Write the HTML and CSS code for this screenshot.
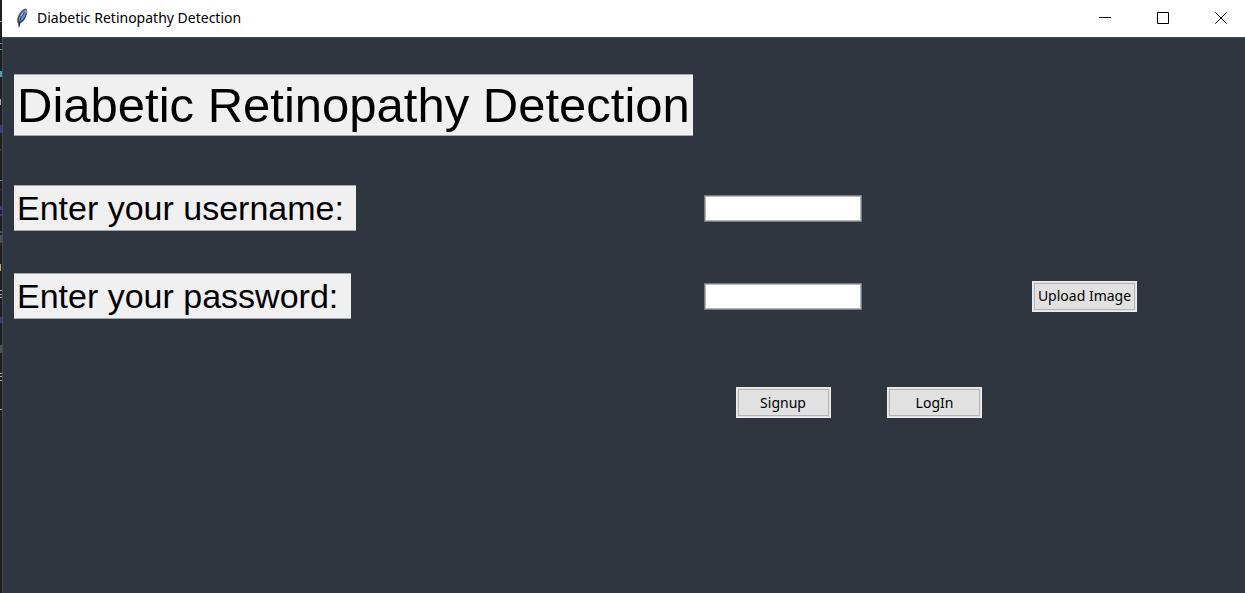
FILE: index.html
```
<!DOCTYPE html>
<html lang="en">
<head>
<meta charset="utf-8">
<title>Diabetic Retinopathy Detection</title>
<link rel="stylesheet" href="styles.css">
</head>
<body>
<div class="desktop">
  <svg class="editor-edge" viewBox="0 0 2 593" preserveAspectRatio="xMinYMin slice" aria-hidden="true">
    <path fill="#b0b0b0" d="M0 21h2v1H0zM0 290h2v1H0zM0 294h2v1H0zM0 297h2v1H0zM0 373h2v1H0zM0 376h2v1H0zM0 380h2v1H0zM0 409h2v1H0zM0 99h1v6H0z"/>
    <path fill="#4aa0b8" d="M0 43h2v1H0zM0 49h2v1H0zM0 71h2v6H0zM0 180h2v1H0z"/>
    <path fill="#3a3a8c" d="M0 125h2v8H0zM0 206h2v4H0zM0 214h2v2H0zM0 317h2v6H0z"/>
    <path fill="#c8a468" d="M0 264h1v7H0z"/>
    <path fill="#7a2424" d="M0 149h1v2H0zM0 189h1v1H0zM0 244h1v1H0z"/>
    <path fill="#4c525c" d="M0 231h2v2H0zM0 235h2v8H0zM0 345h2v8H0z"/>
  </svg>
  <main class="window">
    <header class="titlebar">
      <svg class="feather" viewBox="0 0 14 20" aria-hidden="true">
        <path d="M11 .5C8 .8 4.500 4.500 3 8.500C1.800 11.500 2 14 3.200 16L3.700 19.500L4.800 18.500L5.200 15.500C8.500 14 11.200 10 12 5.500C12.400 3 12.200 1 11 .5Z" fill="#4b4b4d"/>
        <path d="M10.300 2C7.800 3 5.300 6 4.300 9.500C3.700 11.800 3.700 13 4.200 14.300C7.500 12.500 9.700 9.500 10.700 6C11.200 4 11 2.500 10.300 2Z" fill="#5a96de"/>
        <path d="M9.500 4L5.500 10.500L4 18.500" fill="none" stroke="#1c3250" stroke-width=".8"/>
        <path d="M11 1.500L11 5M8 4.500L6 8" fill="none" stroke="#b9cce0" stroke-width=".8"/>
      </svg>
      <span class="caption">Diabetic Retinopathy Detection</span>
      <div class="controls">
        <button class="control" type="button" aria-label="Minimize"><svg class="glyph" viewBox="0 0 12 12"><path d="M0 5.500H12"/></svg></button>
        <button class="control" type="button" aria-label="Maximize"><svg class="glyph" viewBox="0 0 12 12"><path d="M.5 .5H11.500V11.500H.5Z"/></svg></button>
        <button class="control" type="button" aria-label="Close"><svg class="glyph" viewBox="0 0 12 12"><path d="M.3 .3L11.700 11.700M11.700 .3L.3 11.700"/></svg></button>
      </div>
    </header>
    <form class="form">
      <h1 class="label heading">Diabetic Retinopathy Detection</h1>
      <label class="label username-label" for="username">Enter your username: </label>
      <input class="entry username" id="username" type="text">
      <label class="label password-label" for="password">Enter your password: </label>
      <input class="entry password" id="password" type="password">
      <button class="button upload" type="button">Upload Image</button>
      <button class="button signup" type="button">Signup</button>
      <button class="button login" type="button">LogIn</button>
    </form>
  </main>
</div>
</body>
</html>
```
FILE: styles.css
```
body {
  margin: 0;
  background: #30363f;
}

.desktop {
  display: flex;
  min-height: 100vh;
  background: #1e1e1e;
  overflow: hidden;
}

.editor-edge {
  flex: none;
  width: 2px;
  height: 593px;
}

.window {
  flex: 1;
  display: flex;
  flex-direction: column;
}

.titlebar {
  box-sizing: border-box;
  display: flex;
  align-items: center;
  height: 37px;
  padding: 0 0 2px 13px;
  background: #fff;
}

.feather {
  width: 14px;
  height: 20px;
  margin-right: 8px;
}

.caption {
  flex: 1;
  font: 14px/20px "Noto Sans", sans-serif;
  color: #000;
}

.controls {
  display: flex;
  margin-right: -5px;
}

.control {
  display: flex;
  align-items: center;
  justify-content: center;
  width: 58px;
  height: 35px;
  padding: 0;
  border: 0;
  background: transparent;
}

.glyph {
  width: 12px;
  height: 12px;
  fill: none;
  stroke: #000;
}

.form {
  flex: 1;
  display: grid;
  grid-template-columns: 678px 12px 158px 25px 95px 50px 105px;
  grid-template-rows: 69px 46px 46px 83px;
  row-gap: 42px;
  align-content: start;
  align-items: center;
  padding: 36px 0 0 11px;
  border: solid #454b54;
  border-width: 1px 0 0 1px;
  background: #30363f;
}

.label {
  justify-self: start;
  box-sizing: border-box;
  margin: 0;
  padding: 0 3px;
  border: solid #a4a7ab;
  border-width: 1px 0;
  background: #f0f0f0;
  color: #000;
  font: 34px/44px "Liberation Sans", Arial, sans-serif;
  white-space: pre;
}

.heading {
  grid-area: 1 / 1;
  align-self: start;
  font-size: 49px;
  line-height: 60px;
}

.username-label {
  grid-area: 2 / 1;
}

.password-label {
  grid-area: 3 / 1;
}

.entry {
  box-sizing: border-box;
  width: 100%;
  height: 27px;
  padding: 2px 4px;
  border: 1px solid #777a7e;
  outline: 1px solid #b8b8b8;
  outline-offset: -2px;
  background: #fff;
  font: 14px/20px "Noto Sans", sans-serif;
}

.username {
  grid-area: 2 / 3;
}

.password {
  grid-area: 3 / 3;
}

.button {
  box-sizing: border-box;
  height: 31px;
  padding: 0;
  border: 1px solid #eceeee;
  outline: 1px solid #b4b4b4;
  outline-offset: -3px;
  background: #e1e1e1;
  color: #000;
  font: 14px/20px "Noto Sans", sans-serif;
}

.upload {
  grid-area: 3 / 7;
}

.signup {
  grid-area: 4 / 3;
  justify-self: center;
  width: 95px;
}

.login {
  grid-area: 4 / 5;
}
```
